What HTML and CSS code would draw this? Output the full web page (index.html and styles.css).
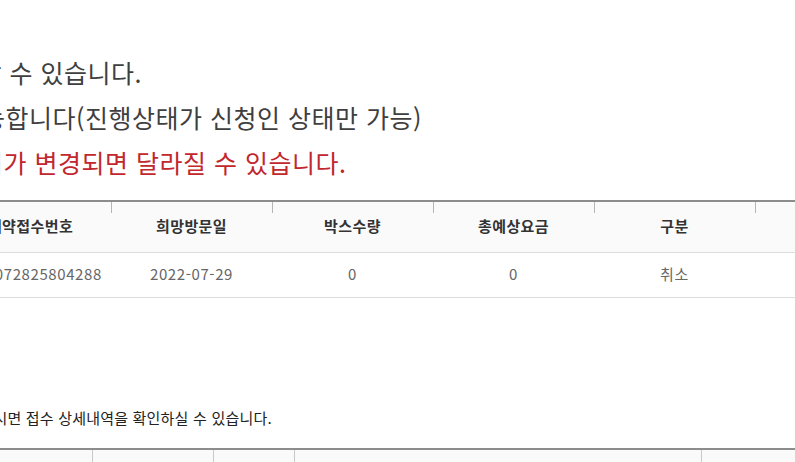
FILE: index.html
```html
<!DOCTYPE html>
<html lang="ko">
<head>
<meta charset="utf-8">
<link rel="stylesheet" href="styles.css">
</head>
<body>
<div class="page">
  <div class="notice">
    <p class="line l1">방문접수는 신청 후 취소할 수 있습니다.</p>
    <p class="line l2">접수 취소는 가능합니다(진행상태가 신청인 상태만 가능)</p>
    <p class="line l3 red">예상요금은 박스 크기가 변경되면 달라질 수 있습니다.</p>
  </div>

  <table class="list list1">
    <colgroup>
      <col class="c161"><col class="c161"><col class="c161"><col class="c161"><col class="c161"><col class="c161">
    </colgroup>
    <thead>
      <tr>
        <th>예약접수번호</th>
        <th>희망방문일</th>
        <th>박스수량</th>
        <th>총예상요금</th>
        <th>구분</th>
        <th></th>
      </tr>
    </thead>
    <tbody>
      <tr>
        <td>2022072825804288</td>
        <td>2022-07-29</td>
        <td>0</td>
        <td>0</td>
        <td>취소</td>
        <td></td>
      </tr>
    </tbody>
  </table>

  <p class="guide">접수번호를 클릭하시면 접수 상세내역을 확인하실 수 있습니다.</p>

  <table class="list list2">
    <colgroup>
      <col class="w152"><col class="w121"><col class="w81"><col class="w407"><col class="w150">
    </colgroup>
    <thead>
      <tr>
        <th>&nbsp;</th>
        <th>&nbsp;</th>
        <th>&nbsp;</th>
        <th>&nbsp;</th>
        <th>&nbsp;</th>
      </tr>
    </thead>
  </table>
</div>
</body>
</html>
```
FILE: styles.css
```css
html, body {
  margin: 0;
  padding: 0;
  background: #fff;
}
body {
  width: 795px;
  height: 462px;
  overflow: hidden;
  font-family: "Noto Sans CJK KR", "Noto Sans", sans-serif;
  color: #333;
}
.page {
  padding-top: 50px;
}
.notice {
  margin: 0 0 15px 0;
}
.line {
  margin: 0;
  font-size: 25px;
  line-height: 45px;
  white-space: nowrap;
  color: #3f3f3f;
  letter-spacing: 0.5px;
}
.l1 { margin-left: -279px; }
.l2 { margin-left: -174px; }
.l3 { margin-left: -223px; }
.red { color: #c1272d; }

.list {
  border-collapse: collapse;
  table-layout: fixed;
  border-top: 2px solid #8c8c8c;
}
.list1 {
  margin-left: -50px;
  width: 966px;
}
.c161 { width: 161px; }
.list th {
  font-size: 15px;
  font-weight: bold;
  letter-spacing: 0.4px;
  color: #333;
  height: 47px;
  padding: 0 0 3px 0;
  background: linear-gradient(#b5b5b5, #b5b5b5) left top / 1px 11px no-repeat, #fafafa;
  border-bottom: 1px solid #dcdcdc;
}
.list td {
  font-size: 15px;
  letter-spacing: 0.6px;
  color: #666;
  height: 40px;
  padding: 0 0 4px 0;
  text-align: center;
  border-bottom: 1px solid #dcdcdc;
}
.guide {
  margin: 110px 0 20px 0;
  font-size: 15px;
  line-height: 20px;
  color: #222;
  white-space: nowrap;
  letter-spacing: 0.2px;
  margin-left: -123px;
}
.list2 {
  margin-left: -60px;
  width: 911px;
}
.w152 { width: 152px; }
.w121 { width: 121px; }
.w81 { width: 81px; }
.w407 { width: 407px; }
.w150 { width: 150px; }
.list2 th {
  background: #fafafa;
  border-left: 1px solid #c8c8c8;
}
```
